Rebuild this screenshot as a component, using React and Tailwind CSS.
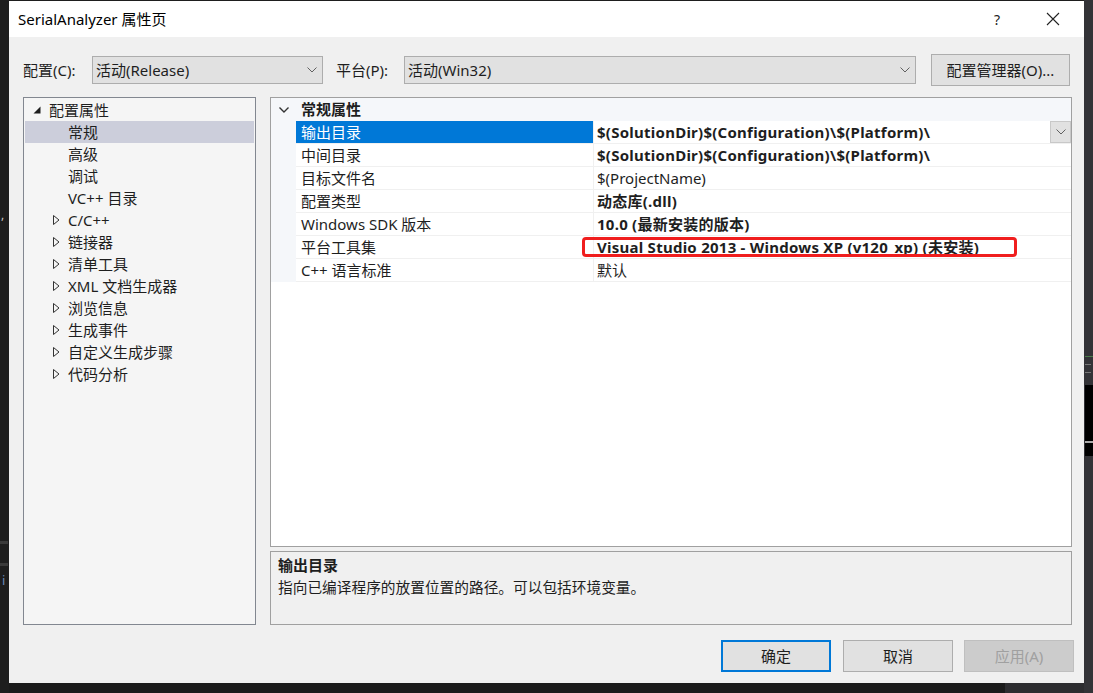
import React from "react";

const F = { fontFamily: '"Noto Sans", "Noto Sans CJK SC", sans-serif' };

function Chevron({ className = "" }) {
  return (
    <svg width="10" height="6" viewBox="0 0 10 6" className={className}>
      <path d="M0.5 0.5 L5 5 L9.5 0.5" fill="none" stroke="#606060" strokeWidth="1" />
    </svg>
  );
}

function Hollow() {
  return (
    <svg width="7" height="10" viewBox="0 0 7 10">
      <path d="M0.5 0.5 L6 5 L0.5 9.5 Z" fill="none" stroke="#333" strokeWidth="1" />
    </svg>
  );
}

const treeChildren = ["常规", "高级", "调试", "VC++ 目录"];
const treeGroups = ["C/C++", "链接器", "清单工具", "XML 文档生成器", "浏览信息", "生成事件", "自定义生成步骤", "代码分析"];

const rows = [
  { n: "输出目录", v: "$(SolutionDir)$(Configuration)\\$(Platform)\\", b: true, sel: true },
  { n: "中间目录", v: "$(SolutionDir)$(Configuration)\\$(Platform)\\", b: true },
  { n: "目标文件名", v: "$(ProjectName)", b: false },
  { n: "配置类型", v: "动态库(.dll)", b: true },
  { n: "Windows SDK 版本", v: "10.0 (最新安装的版本)", b: true },
  { n: "平台工具集", v: "Visual Studio 2013 - Windows XP (v120_xp) (未安装)", b: true, red: true },
  { n: "C++ 语言标准", v: "默认", b: false },
];

export default function App() {
  return (
    <div className="w-[1093px] h-[693px] flex bg-[#1e1e1e] overflow-hidden text-[15px] text-[#1e1e1e]" style={F}>
      {/* left dark strip */}
      <div className="w-[9px] h-full bg-[#1e1e1e] relative">
        <div className="absolute left-[1px] top-[206px] text-[#c8c8c8] text-[12px]">,</div>
        <div className="absolute left-0 top-[541px] w-[8px] h-[3px] bg-[#3a3a3a]" />
        <div className="absolute left-0 top-[563px] w-[8px] h-[3px] bg-[#3a3a3a]" />
        <div className="absolute left-[2px] top-[571px] text-[#6a8ab8] text-[13px]">i</div>
      </div>

      {/* middle */}
      <div className="w-[1075px] h-full flex flex-col">
        <div className="h-[1px]" />
        <div className="h-[682px] bg-[#f0f0f0] flex flex-col">
          {/* title bar */}
          <div className="h-[36px] bg-white flex items-center pl-[9px] shrink-0">
            <span className="text-[15px] text-black">SerialAnalyzer 属性页</span>
            <span className="ml-auto text-[14px] text-[#222] w-[20px] text-center mr-[39px]">?</span>
            <svg width="14" height="14" viewBox="0 0 14 14" className="mr-[24px]">
              <path d="M1 1 L13 13 M13 1 L1 13" stroke="#222" strokeWidth="1.1" />
            </svg>
          </div>

          {/* config row */}
          <div className="h-[32px] mt-[17px] flex items-center pl-[14px] shrink-0">
            <span className="w-[69px]">配置(C):</span>
            <div className="w-[231px] h-[28px] bg-[#e1e1e1] border border-[#adadad] flex items-center pl-[3px] pr-[5px]">
              <span>活动(Release)</span>
              <Chevron className="ml-auto" />
            </div>
            <span className="w-[68px] ml-[13px]">平台(P):</span>
            <div className="w-[512px] h-[28px] bg-[#e1e1e1] border border-[#adadad] flex items-center pl-[3px] pr-[5px]">
              <span>活动(Win32)</span>
              <Chevron className="ml-auto" />
            </div>
            <div className="ml-[15px] w-[139px] h-[32px] bg-[#e1e1e1] border border-[#adadad] flex items-center justify-center">
              配置管理器(O)...
            </div>
          </div>

          {/* main area */}
          <div className="mt-[11px] flex pl-[14px] h-[528px] shrink-0">
            {/* tree */}
            <div className="w-[233px] h-full border border-[#828790] bg-[#f5f5f5] p-[1px]">
              <div className="h-[22px] flex items-center">
                <svg width="8" height="8" viewBox="0 0 8 8" className="ml-[8px]">
                  <path d="M7.5 0.5 L7.5 7.5 L0.5 7.5 Z" fill="#1e1e1e" />
                </svg>
                <span className="ml-[8px]">配置属性</span>
              </div>
              {treeChildren.map((t, i) => (
                <div key={t} className={`h-[22px] flex items-center pl-[43px] ${i === 0 ? "bg-[#cccedb]" : ""}`}>
                  {t}
                </div>
              ))}
              {treeGroups.map((t) => (
                <div key={t} className="h-[22px] flex items-center pl-[28px]">
                  <Hollow />
                  <span className="ml-[8px]">{t}</span>
                </div>
              ))}
            </div>

            {/* right column */}
            <div className="ml-[14px] w-[802px] h-full flex flex-col">
              <div className="h-[450px] border border-[#a0a0a0] bg-white relative">
                <div className="h-[23px] flex items-center bg-[#f5f7fa]">
                  <svg width="10" height="6" viewBox="0 0 10 6" className="ml-[8px]">
                    <path d="M0.5 0.5 L5 5 L9.5 0.5" fill="none" stroke="#333" strokeWidth="1.4" />
                  </svg>
                  <span className="ml-[12px] font-bold">常规属性</span>
                </div>
                {rows.map((r) => (
                  <div key={r.n} className="h-[23px] flex">
                    <div className="w-[25px] bg-[#f5f7fa]" />
                    <div className={`w-[297px] flex items-center pl-[5px] border-b border-[#f0f0f0] ${r.sel ? "bg-[#0078d7] text-white border-[#0078d7]" : ""}`}>
                      {r.n}
                    </div>
                    <div className="w-[1px] bg-[#f0f0f0]" />
                    <div className={`flex-1 flex items-center pl-[3px] border-b border-[#f0f0f0] relative ${r.b ? "font-bold tracking-[0.25px]" : ""}`}>
                      <span className="whitespace-nowrap">{r.v}</span>
                      {r.sel && (
                        <div className="absolute right-0 top-0 w-[21px] h-[22px] bg-[#e1e1e1] border border-[#c8c8c8] flex items-center justify-center">
                          <Chevron />
                        </div>
                      )}
                      {r.red && (
                        <div className="absolute left-[-12px] top-[1px] w-[435px] h-[20px] border-[3px] border-[#f01e1e] rounded-[4px]" />
                      )}
                    </div>
                  </div>
                ))}
              </div>
              <div className="mt-[4px] h-[74px] border border-[#a0a0a0] bg-[#f0f0f0] pl-[7px] pt-[2px]">
                <div className="font-bold leading-[22px]">输出目录</div>
                <div className="leading-[22px] text-[14.7px]">指向已编译程序的放置位置的路径。可以包括环境变量。</div>
              </div>
            </div>
          </div>

          {/* buttons */}
          <div className="mt-[15px] flex pl-[712px] shrink-0">
            <div className="w-[110px] h-[32px] border-2 border-[#0078d7] bg-[#e1e1e1] flex items-center justify-center">确定</div>
            <div className="ml-[12px] w-[110px] h-[32px] border border-[#adadad] bg-[#e1e1e1] flex items-center justify-center">取消</div>
            <div className="ml-[11px] w-[110px] h-[32px] border border-[#bfbfbf] bg-[#cccccc] text-[#a0a0a0] flex items-center justify-center">应用(A)</div>
          </div>
        </div>
        <div className="flex-1 flex">
          <div className="w-[996px] bg-[#1b1b1b]" />
          <div className="flex-1 bg-[#2d2d30]" />
        </div>
      </div>

      {/* right dark strip */}
      <div className="w-[9px] h-full bg-[#333337] relative">
        <div className="absolute left-[1px] top-[356px] w-[8px] h-[1px] bg-[#4a7a4a]" />
        <div className="absolute left-[1px] top-[364px] w-[6px] h-[1px] bg-[#777]" />
        <div className="absolute left-[1px] top-[372px] w-[6px] h-[1px] bg-[#777]" />
        <div className="absolute left-[1px] top-[385px] w-[8px] h-[71px] bg-black" />
        <div className="absolute left-[1px] top-[441px] w-[8px] h-[2px] bg-[#aaa]" />
      </div>
    </div>
  );
}
